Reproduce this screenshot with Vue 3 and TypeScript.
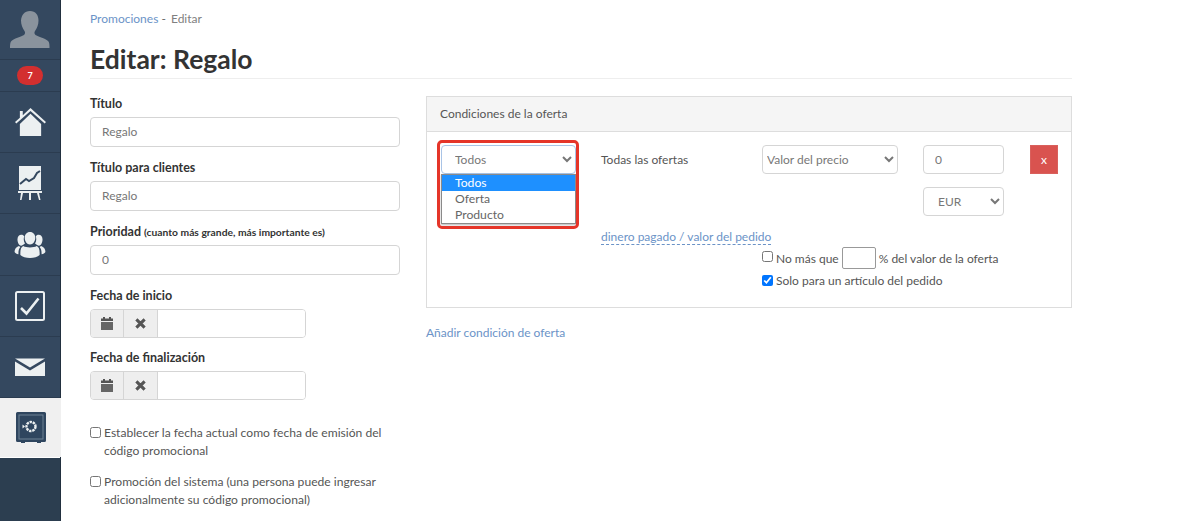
<script setup lang="ts">
const navRows = ['home', 'chart', 'users', 'check', 'mail']
</script>

<template>
  <div class="page">
    <aside class="sidebar">
      <div class="nav-avatar">
        <svg width="42" height="42" viewBox="0 0 42 42">
          <path fill="#8a939d" d="M21 1c5.500 0 8.500 4 8.500 9.500 0 4-1.500 8-3.500 10.500-.8 1-.8 3 .5 4 2 1.500 11 3.500 13 6.500 1 1.500 1 4.500 1 6.500H1c0-2 0-5 1-6.500 2-3 11-5 13-6.500 1.300-1 1.300-3 .5-4-2-2.500-3.500-6.500-3.500-10.500C12.500 5 15.500 1 21 1z" />
        </svg>
      </div>
      <div class="nav-badge"><span class="badge">7</span></div>
      <div v-for="row in navRows" :key="row" class="nav-item">
        <svg v-if="row === 'home'" width="31" height="29" viewBox="0 0 32 30">
          <path fill="#ecf0f1" d="M16 0 32 14.500l-1.300 1.500L16 3 1.300 16 0 14.500 5 10V3h3v4.400zM5 16.500 16 6l11 10.500V29H5z" />
        </svg>
        <svg v-else-if="row === 'chart'" width="24" height="34" viewBox="0 0 24 34">
          <path fill="#ecf0f1" d="M1 0h22v24H1z" />
          <path fill="none" stroke="#34485f" stroke-width="2" d="M2 18l6-5 3 2 5-3 3-5 3-2" />
          <path fill="#ecf0f1" d="M0 25h24v2H0zM3 27h2l-1.500 7H2zM11 27h2v7h-2zM19 27h2l1.500 7H21z" />
        </svg>
        <svg v-else-if="row === 'users'" width="32" height="27" viewBox="0 0 32 28">
          <path fill="#ecf0f1" d="M16 1c3.300 0 5.500 2.500 5.500 6s-2.200 7-5.500 7-5.500-3.500-5.500-7 2.200-6 5.500-6zM9 15.500c2 1 4 1.500 7 1.500s5-.5 7-1.500c2 1 3 3 3 7V25c-2 2-6 3-10 3s-8-1-10-3v-2.500c0-4 1-6 3-7zM7 4c1.500 0 2.500.7 3 1.800-.8 2-.7 4.800.8 7.200-1 .8-2.500 1.600-3.800 2.200C4 15 3 11 3 8.800 3 6 4.700 4 7 4zM25 4c2.300 0 4 2 4 4.800 0 2.200-1 6.200-4 6.400-1.300-.6-2.800-1.400-3.800-2.200 1.500-2.400 1.600-5.200.8-7.200.5-1.100 1.500-1.800 3-1.800zM4.500 15.500 6 16.500c-1.300 1.500-2 3.500-2 6.700v1C2 24 0 22.500 0 21.500c0-2.500 1.500-5 4.500-6zM27.500 15.500c3 1 4.500 3.500 4.500 6 0 1-2 2.500-4 2.700v-1c0-3.200-.7-5.200-2-6.700z" />
        </svg>
        <svg v-else-if="row === 'check'" width="30" height="30" viewBox="0 0 30 30">
          <rect x="1" y="1" width="28" height="28" rx="1.500" fill="none" stroke="#ecf0f1" stroke-width="2" />
          <path fill="none" stroke="#ecf0f1" stroke-width="2.600" d="M6 17l5.500 5.500L23.500 7.500" />
        </svg>
        <svg v-else width="30" height="18" viewBox="0 0 30 18">
          <path fill="#ecf0f1" d="M0 .5h30L15 9.500zM0 3.500l15 9 15-9V18H0z" />
        </svg>
      </div>
      <div class="nav-safe">
        <svg width="30" height="31" viewBox="0 0 30 31">
          <path fill="#2f465f" d="M1.500 0h27A1.500 1.500 0 0 1 30 1.500v27a1.500 1.500 0 0 1-1.500 1.500H25v1h-4v-1H9v1H5v-1H1.500A1.500 1.500 0 0 1 0 28.500v-27A1.500 1.500 0 0 1 1.500 0z" />
          <rect x="3" y="3" width="24" height="24" fill="none" stroke="#6f8295" stroke-width="1" />
          <circle cx="15" cy="14.500" r="4.500" fill="none" stroke="#ecf0f1" stroke-width="2.400" stroke-dasharray="2.400 .8" />
          <path fill="#ecf0f1" d="M6.500 12.500l2.500 2-2.500 2z" />
        </svg>
      </div>
      <div class="nav-rest"></div>
    </aside>

    <main class="content">
      <nav class="crumbs"><a class="link">Promociones</a><span class="sep"> - </span><span class="current">Editar</span></nav>
      <h1 class="title">Editar: Regalo</h1>

      <div class="columns">
        <form class="left">
          <div class="field">
            <label>Título</label>
            <input class="control" type="text" value="Regalo" />
          </div>
          <div class="field">
            <label>Título para clientes</label>
            <input class="control" type="text" value="Regalo" />
          </div>
          <div class="field">
            <label>Prioridad <small>(cuanto más grande, más importante es)</small></label>
            <input class="control" type="text" value="0" />
          </div>
          <div class="field date">
            <label>Fecha de inicio</label>
            <div class="date-group">
              <span class="addon">
                <svg width="12" height="13" viewBox="0 0 12 13"><path fill="#555" d="M2 0h2v1.500h4V0h2v1.500h2V4H0V1.500h2z" /><path fill="#666" d="M0 5h12v8H0z" /></svg>
              </span>
              <span class="addon">
                <svg width="11" height="11" viewBox="0 0 12 12"><path fill="none" stroke="#555" stroke-width="3.400" d="M1.500 1.500l9 9M10.500 1.500l-9 9" /></svg>
              </span>
              <input class="date-input" type="text" />
            </div>
          </div>
          <div class="field date">
            <label>Fecha de finalización</label>
            <div class="date-group">
              <span class="addon">
                <svg width="12" height="13" viewBox="0 0 12 13"><path fill="#555" d="M2 0h2v1.500h4V0h2v1.500h2V4H0V1.500h2z" /><path fill="#666" d="M0 5h12v8H0z" /></svg>
              </span>
              <span class="addon">
                <svg width="11" height="11" viewBox="0 0 12 12"><path fill="none" stroke="#555" stroke-width="3.400" d="M1.500 1.500l9 9M10.500 1.500l-9 9" /></svg>
              </span>
              <input class="date-input" type="text" />
            </div>
          </div>
          <label class="check-para first">
            <input type="checkbox" /><span>Establecer la fecha actual como fecha de emisión del código promocional</span>
          </label>
          <label class="check-para">
            <input type="checkbox" /><span>Promoción del sistema (una persona puede ingresar adicionalmente su código promocional)</span>
          </label>
        </form>

        <section class="right">
          <div class="panel">
            <div class="panel-head">Condiciones de la oferta</div>
            <div class="panel-body">
              <div class="type-col">
                <select class="select type-select">
                  <option>Todos</option>
                  <option>Oferta</option>
                  <option>Producto</option>
                </select>
                <ul class="dropdown">
                  <li class="active">Todos</li>
                  <li>Oferta</li>
                  <li>Producto</li>
                </ul>
                <div class="highlight"></div>
              </div>
              <div class="main-col">
                <div class="cond-row">
                  <span class="cond-label">Todas las ofertas</span>
                  <select class="select price-select"><option>Valor del precio</option></select>
                  <div class="value-col">
                    <input class="control value-input" type="text" value="0" />
                    <select class="select cur-select"><option>EUR</option></select>
                  </div>
                  <button class="remove" type="button">x</button>
                </div>
                <a class="dotted">dinero pagado / valor del pedido</a>
                <div class="opts">
                  <label class="opt one">
                    <input type="checkbox" /><span>No más que</span><input class="pct" type="text" /><span>% del valor de la oferta</span>
                  </label>
                  <label class="opt two">
                    <input type="checkbox" checked /><span>Solo para un artículo del pedido</span>
                  </label>
                </div>
              </div>
            </div>
          </div>
          <a class="link add">Añadir condición de oferta</a>
        </section>
      </div>
    </main>
  </div>
</template>

<style>
html, body { margin: 0; padding: 0; background: #fff; overflow: hidden; }
</style>

<style scoped>
.page {
  display: flex;
  height: 521px;
  overflow: hidden;
  font-family: Lato, "Liberation Sans", sans-serif;
  font-size: 12px;
  color: #555;
}
.sidebar {
  width: 60px;
  flex: none;
  display: flex;
  flex-direction: column;
  background: #34485f;
  border-right: 1px solid #22303f;
}
.nav-avatar {
  height: 60px;
  flex: none;
  display: flex;
  justify-content: center;
  align-items: flex-end;
  padding-bottom: 7px;
  box-sizing: border-box;
  border-bottom: 1px solid #2b3c50;
}
.nav-badge {
  height: 32px;
  flex: none;
  box-sizing: border-box;
  display: flex;
  justify-content: center;
  align-items: center;
  border-bottom: 1px solid #2b3c50;
}
.badge {
  width: 26px;
  height: 19px;
  border-radius: 10px;
  background: #d32f2f;
  color: #fff;
  font-size: 9px;
  font-weight: 700;
  line-height: 19px;
  text-align: center;
}
.nav-item {
  height: 61.2px;
  flex: none;
  box-sizing: border-box;
  display: flex;
  justify-content: center;
  align-items: center;
  border-bottom: 1px solid #2b3c50;
}
.nav-safe {
  height: 59px;
  flex: none;
  box-sizing: border-box;
  display: flex;
  justify-content: center;
  align-items: center;
  background: #f0f0f0;
  width: 61px;
  margin-right: -1px;
}
.nav-rest {
  flex: 1;
  background: #2c3e50;
  border-top: 1px solid #fff;
}
.content {
  flex: 1;
  min-width: 0;
  padding: 12px 128px 0 29px;
}
.crumbs {
  font-size: 12px;
  line-height: 14px;
}
.link { color: #6b93c7; }
.sep { color: #666; white-space: pre; }
.current { color: #808080; margin-left: 2px; }
.title {
  margin: 17px 0 0;
  padding-bottom: 3px;
  font-size: 26.5px;
  line-height: 32px;
  font-weight: 700;
  color: #333;
  border-bottom: 1px solid #eee;
}
.columns {
  display: flex;
  gap: 26px;
  margin-top: 17px;
}
.left { width: 310px; flex: none; }
.field { margin-bottom: 13px; }
.field.date { margin-bottom: 12px; }
.field label {
  display: block;
  font-size: 12.5px;
  font-weight: 700;
  color: #333;
  line-height: 16px;
  margin-bottom: 5px;
}
.field small { font-size: 10.3px; font-weight: 700; }
.control {
  display: block;
  box-sizing: border-box;
  width: 100%;
  height: 30px;
  padding: 0 11px 1px;
  font: inherit;
  font-size: 12px;
  color: #777;
  border: 1px solid #d5d5d5;
  border-radius: 4px;
  background: #fff;
}
.date-group {
  display: flex;
  width: 216px;
  height: 29px;
  box-sizing: border-box;
  border: 1px solid #d5d5d5;
  border-radius: 4px;
  overflow: hidden;
}
.addon {
  width: 34px;
  box-sizing: border-box;
  flex: none;
  display: flex;
  align-items: center;
  justify-content: center;
  background: #eee;
  border-right: 1px solid #d5d5d5;
}
.addon:first-child { width: 33px; }
.date-input {
  flex: 1;
  min-width: 0;
  border: 0;
  outline: 0;
  padding: 0;
}
.check-para {
  display: flex;
  align-items: flex-start;
  line-height: 18px;
  font-size: 12.1px;
  margin-bottom: 13px;
  color: #555;
}
.check-para.first { margin-top: 24px; }
.check-para input { width: 11px; height: 11px; flex: none; margin: 3px 3px 0 0; }
.right { flex: 1; min-width: 0; }
.panel {
  border: 1px solid #ddd;
  height: 212px;
  box-sizing: border-box;
}
.panel-head {
  height: 35px;
  box-sizing: border-box;
  padding: 0 13px;
  line-height: 34px;
  background: #f5f5f5;
  border-bottom: 1px solid #ddd;
  font-size: 12px;
}
.panel-body {
  display: flex;
  padding: 13px 0 0 14px;
}
.type-col {
  position: relative;
  width: 135px;
  flex: none;
  margin-right: 25px;
}
.select {
  box-sizing: border-box;
  height: 29px;
  font: inherit;
  font-size: 12px;
  color: #777;
  background: #fff;
  border: 1px solid #d5d5d5;
  border-radius: 4px;
}
.type-select {
  display: block;
  width: 135px;
  padding: 0 0 0 9px;
  border-color: #a9c4e6;
}
.dropdown {
  position: absolute;
  left: 0;
  top: 29px;
  width: 135px;
  box-sizing: border-box;
  margin: 0;
  padding: 0;
  list-style: none;
  border: 1px solid #8a8a8a;
  background: #fff;
  font-size: 12.2px;
  line-height: 16px;
  color: #666;
  box-shadow: 0 1px 2px rgba(0, 0, 0, 0.3);
  z-index: 2;
}
.dropdown li { padding-left: 13px; height: 16px; }
.dropdown li.active { background: #1e90ff; color: #fff; }
.highlight {
  position: absolute;
  left: -4px;
  top: -5px;
  width: 142px;
  height: 89px;
  box-sizing: border-box;
  border: 3px solid #e53529;
  border-radius: 5px;
  z-index: 3;
  pointer-events: none;
}
.main-col { flex: 1; min-width: 0; }
.cond-row { display: flex; align-items: flex-start; }
.cond-label {
  width: 161px;
  flex: none;
  line-height: 29px;
  font-size: 12px;
}
.price-select { width: 136px; flex: none; margin-right: 25px; }
.value-col { width: 81px; flex: none; margin-right: 26px; }
.value-input { height: 29px; padding: 0 11px; }
.cur-select { display: block; width: 81px; margin-top: 13px; padding-left: 10px; }
.remove {
  width: 28px;
  height: 29px;
  flex: none;
  padding: 0;
  border: 1px solid #d9605c;
  background: #d9534f;
  color: #fff;
  font: inherit;
  font-size: 12px;
}
.dotted {
  display: inline-block;
  margin-top: 14px;
  color: #6b93c7;
  font-size: 12px;
  line-height: 14px;
  border-bottom: 1px dashed #6b93c7;
}
.opts { margin-left: 161px; margin-top: 2px; }
.opt { display: flex; align-items: center; font-size: 12px; }
.opt input[type="checkbox"] { margin: 0 3px 0 0; width: 11px; height: 11px; }
.opt.one { height: 22px; }
.opt.one input[type="checkbox"] { margin-top: -3px; }
.opt.two { margin-top: 4px; line-height: 16px; }
.opt.two input[type="checkbox"] { margin-top: -2px; }
.pct {
  box-sizing: border-box;
  width: 34px;
  height: 22px;
  margin: 0 3px;
  border: 1px solid #999;
  border-radius: 2px;
  padding: 0;
}
.add {
  display: block;
  margin-top: 17px;
  font-size: 12px;
  line-height: 16px;
}
</style>
